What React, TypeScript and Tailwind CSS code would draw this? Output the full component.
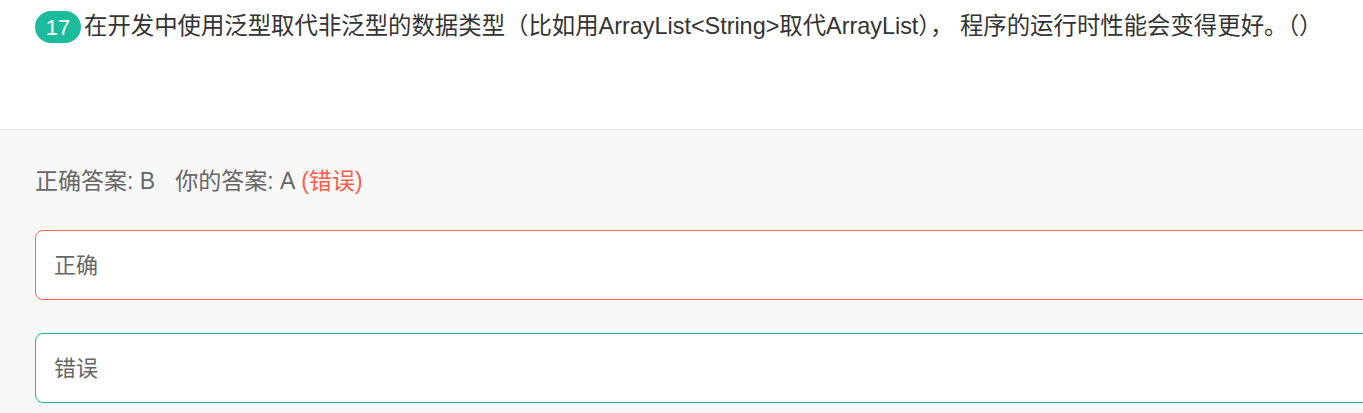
export default function App() {
  return (
    <div
      className="w-[1363px] h-[413px] overflow-hidden bg-[#f8f8f8]"
      style={{ fontFamily: '"Liberation Sans", "Noto Sans CJK SC", sans-serif' }}
    >
      <div className="h-[130px] bg-white border-b border-[#e6e6e6] pl-[35px] pt-[11px]">
        <div className="flex items-center h-[32px] text-[23.4px] text-[#333] whitespace-nowrap">
          <span className="inline-flex items-center justify-center w-[46px] h-[32px] rounded-full bg-[#1bbc9b] text-white text-[22px] mr-[3px] shrink-0">
            17
          </span>
          <span>在开发中使用泛型取代非泛型的数据类型（比如用ArrayList&lt;String&gt;取代ArrayList）， 程序的运行时性能会变得更好。（）</span>
        </div>
      </div>
      <div className="pl-[35px] pt-[36px]">
        <div className="h-[30px] flex items-center text-[23px] text-[#666] whitespace-nowrap">
          <span>正确答案: B</span>
          <span className="ml-[20px]">你的答案: A</span>
          <span className="ml-[6px] text-[#ff5b4b]">(错误)</span>
        </div>
        <div className="mt-[34px] flex flex-col gap-[33px]">
          <div className="w-[1400px] h-[70px] shrink-0 bg-white border border-[#ff6a4d] rounded-[8px] flex items-center pl-[18px] text-[22px] text-[#666]">
            正确
          </div>
          <div className="w-[1400px] h-[70px] shrink-0 bg-white border border-[#1bbc9b] rounded-[8px] flex items-center pl-[18px] text-[22px] text-[#666]">
            错误
          </div>
        </div>
      </div>
    </div>
  );
}
